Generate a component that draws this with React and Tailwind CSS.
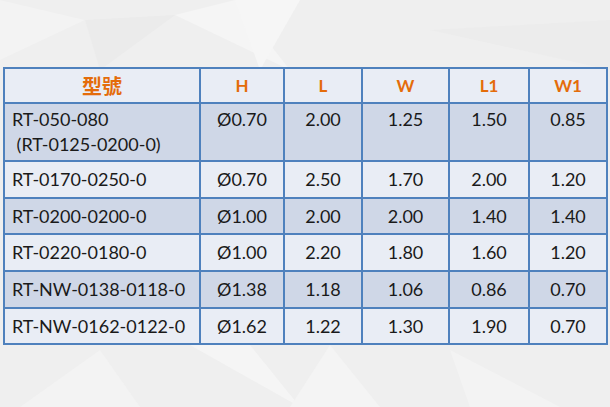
import React from 'react';

const cols = ['型號', 'H', 'L', 'W', 'L1', 'W1'];

const rows = [
  { name: ['RT-050-080', '\u00a0(RT-0125-0200-0)'], vals: ['Ø0.70', '2.00', '1.25', '1.50', '0.85'], dark: true, tall: true },
  { name: ['RT-0170-0250-0'], vals: ['Ø0.70', '2.50', '1.70', '2.00', '1.20'] },
  { name: ['RT-0200-0200-0'], vals: ['Ø1.00', '2.00', '2.00', '1.40', '1.40'], dark: true },
  { name: ['RT-0220-0180-0'], vals: ['Ø1.00', '2.20', '1.80', '1.60', '1.20'] },
  { name: ['RT-NW-0138-0118-0'], vals: ['Ø1.38', '1.18', '1.06', '0.86', '0.70'], dark: true },
  { name: ['RT-NW-0162-0122-0'], vals: ['Ø1.62', '1.22', '1.30', '1.90', '0.70'] },
];

const widths = ['w-[196px]', 'w-[84px]', 'w-[78px]', 'w-[87px]', 'w-[80px]', 'w-[78px]'];

const App = () => {
  return (
    <div className="relative w-[610px] h-[407px] overflow-hidden bg-[#efefef] font-['Lato','Noto_Sans_CJK_TC',sans-serif]">
      {/* faint polygon backdrop */}
      <svg className="absolute inset-0" width="610" height="407" viewBox="0 0 610 407">
        <polygon points="0,0 85,20 0,60" fill="#f3f3f3" />
        <polygon points="85,20 175,15 100,70" fill="#ebebeb" />
        <polygon points="175,15 235,0 290,70" fill="#f5f5f5" />
        <polygon points="235,0 300,0 260,70" fill="#f6f6f6" />
        <polygon points="430,30 610,20 610,70" fill="#ececec" />
        <polygon points="100,350 140,407 20,407" fill="#f3f3f3" />
        <polygon points="190,345 250,345 300,407" fill="#f5f5f5" />
        <polygon points="330,345 290,407 380,407" fill="#f4f4f4" />
        <polygon points="450,350 560,407 470,407" fill="#f3f3f3" />
      </svg>

      <div className="relative pt-[67px] pl-[3px]">
        <table className="border-collapse border-2 border-[#4f81bd] text-[18px] text-[#1a1a1a] table-fixed">
          <thead>
            <tr className="h-[35px] bg-[#e9edf5]">
              {cols.map((c, i) => (
                <th
                  key={c}
                  className={`${widths[i]} border-2 border-[#4f81bd] text-center font-bold text-[#e46c0a] p-0 ${i === 0 ? 'text-[20px]' : 'text-[17px]'}`}
                >
                  {c}
                </th>
              ))}
            </tr>
          </thead>
          <tbody>
            {rows.map((r) => (
              <tr key={r.name[0]} className={`${r.tall ? 'h-[58px]' : 'h-[36.7px]'} ${r.dark ? 'bg-[#cfd7e7]' : 'bg-[#e9edf5]'}`}>
                <td className={`border-2 border-[#4f81bd] px-[7px] leading-[25px] ${r.tall ? 'align-top pt-[3px]' : ''}`}>
                  {r.name.map((n) => (
                    <div key={n}>{n}</div>
                  ))}
                </td>
                {r.vals.map((v, i) => (
                  <td
                    key={i}
                    className={`border-2 border-[#4f81bd] text-center p-0 leading-[25px] ${r.tall ? 'align-top pt-[3px]' : ''}`}
                  >
                    {v}
                  </td>
                ))}
              </tr>
            ))}
          </tbody>
        </table>
      </div>
    </div>
  );
};

export default App;
